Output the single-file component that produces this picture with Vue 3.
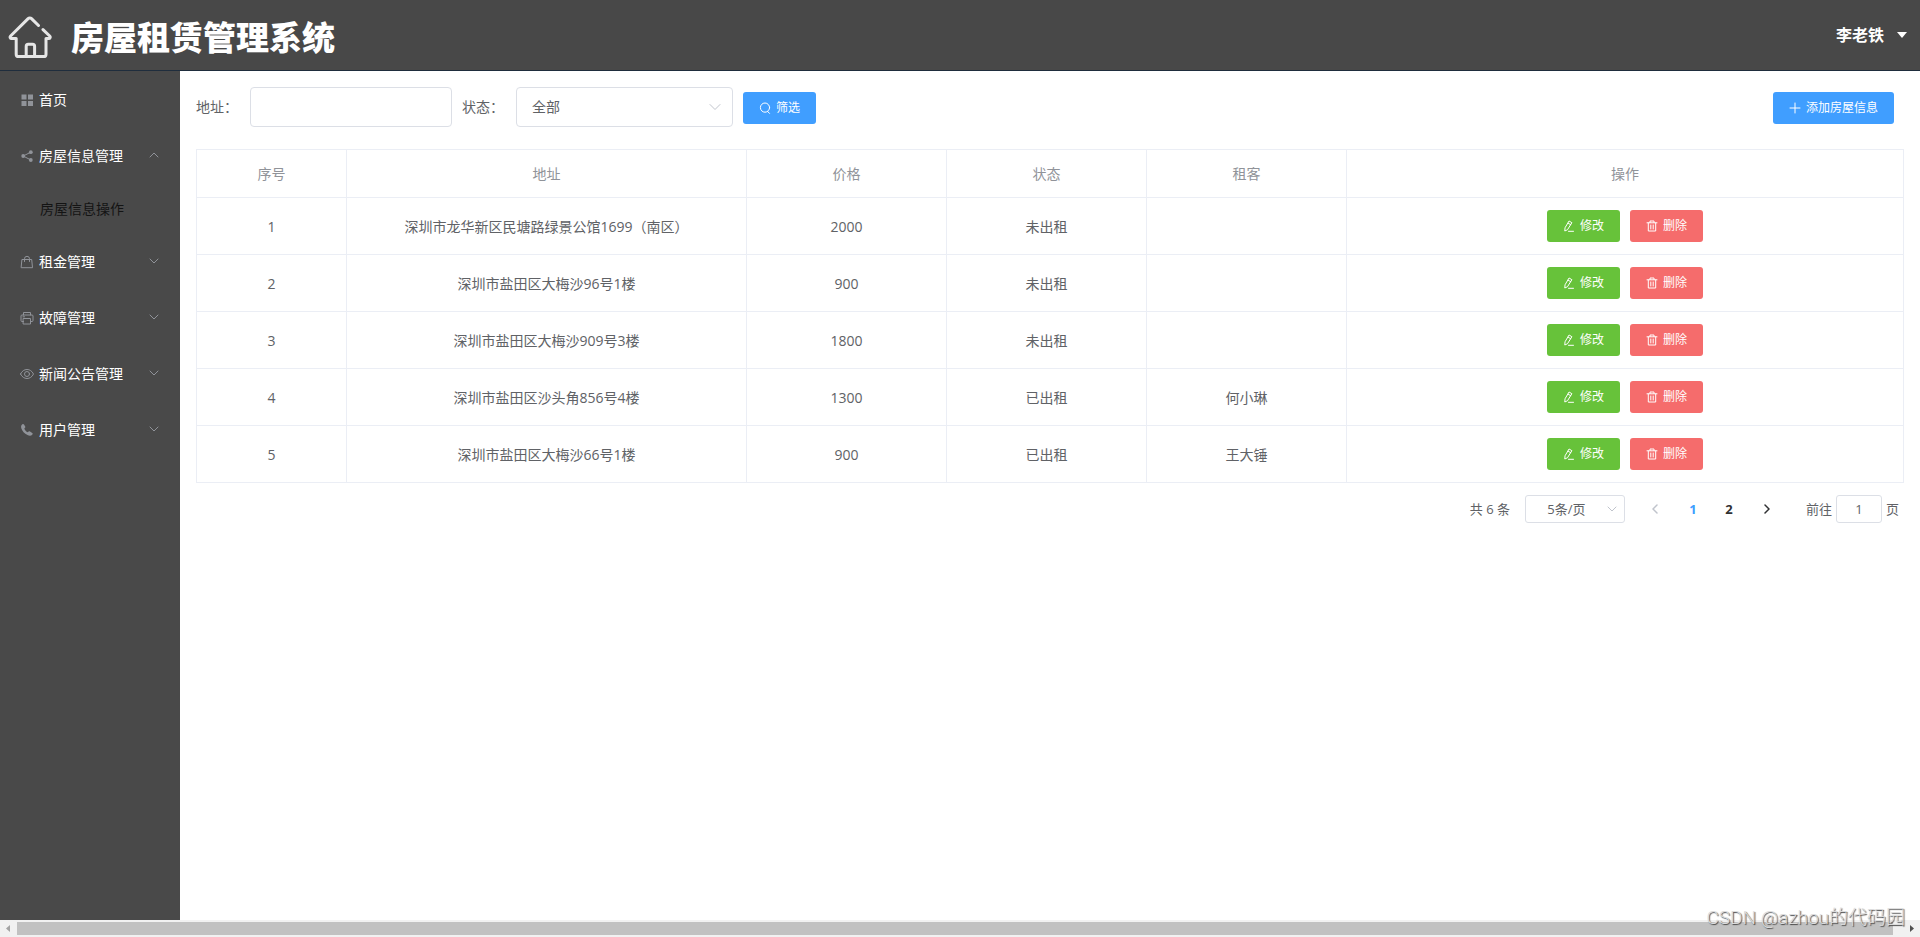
<script setup>
import { ref } from 'vue'

const address = ref('')
const status = ref('全部')
const pageSize = ref('5条/页')
const jump = ref('1')

const menuAfter = [
  { icon: 'bag', title: '租金管理' },
  { icon: 'printer', title: '故障管理' },
  { icon: 'view', title: '新闻公告管理' },
  { icon: 'phone', title: '用户管理' },
]

const columns = ['序号', '地址', '价格', '状态', '租客', '操作']

const houses = [
  { id: 1, address: '深圳市龙华新区民塘路绿景公馆1699（南区）', price: 2000, status: '未出租', tenant: '' },
  { id: 2, address: '深圳市盐田区大梅沙96号1楼', price: 900, status: '未出租', tenant: '' },
  { id: 3, address: '深圳市盐田区大梅沙909号3楼', price: 1800, status: '未出租', tenant: '' },
  { id: 4, address: '深圳市盐田区沙头角856号4楼', price: 1300, status: '已出租', tenant: '何小琳' },
  { id: 5, address: '深圳市盐田区大梅沙66号1楼', price: 900, status: '已出租', tenant: '王大锤' },
]
</script>

<template>
  <div class="app">
    <header class="topbar">
      <svg class="logo" viewBox="0 0 44 44" aria-hidden="true">
        <path d="M30.5 10.5 23.5 3.6a2.4 2.4 0 0 0-3.4 0L2.6 21c-1 1-.4 2.6 1 2.6h4.6v15.6A2.4 2.4 0 0 0 10.6 41.600h25A2.400 2.400 0 0 0 38 39.200V23.600h2.700c1.400 0 2-1.600 1-2.600L35 14.600" />
        <path d="M18.200 41V31.200a2 2 0 0 1 2-2h4.400a2 2 0 0 1 2 2V41" />
      </svg>
      <h1 class="brand">房屋租赁管理系统</h1>
      <button class="user" type="button">
        <span>李老铁</span>
        <svg viewBox="0 0 10 6" width="10" height="6" aria-hidden="true"><path d="M0 0h10L5 6z" fill="#fff" /></svg>
      </button>
    </header>

    <div class="body">
      <nav class="sidebar">
        <a class="item" href="#">
          <svg class="ico solid" viewBox="0 0 14 14" aria-hidden="true">
            <path d="M1.500 1.500h5v5h-5zM8 1.500h5v5H8zM1.500 8h5v5h-5zM8 8h5v5H8z" />
          </svg>
          <span>首页</span>
        </a>
        <button class="item" type="button">
          <svg class="ico solid" viewBox="0 0 14 14" aria-hidden="true">
            <circle cx="3.200" cy="7" r="1.900" /><circle cx="10.800" cy="3.200" r="1.900" /><circle cx="10.800" cy="11" r="1.900" />
            <path d="M3.200 7 10.800 3.200M3.200 7l7.600 4" stroke="#909399" stroke-width="1" />
          </svg>
          <span>房屋信息管理</span>
          <svg class="arrow" viewBox="0 0 12 12" aria-hidden="true"><path d="M2 8 6 4l4 4" /></svg>
        </button>
        <a class="subitem" href="#">房屋信息操作</a>
        <button v-for="m in menuAfter" :key="m.title" class="item" type="button">
          <svg v-if="m.icon === 'bag'" class="ico" viewBox="0 0 14 14" aria-hidden="true">
            <path d="M2.300 4.500h9.400l.8 8.200h-11zM4.500 6.500V3.800a2.500 2.500 0 0 1 5 0v2.700" />
          </svg>
          <svg v-else-if="m.icon === 'printer'" class="ico" viewBox="0 0 14 14" aria-hidden="true">
            <path d="M3.500 4V1.500h7V4M3.500 10.500h-1.500a1 1 0 0 1-1-1V5a1 1 0 0 1 1-1h10a1 1 0 0 1 1 1v4.500a1 1 0 0 1-1 1h-1.500M3.500 7.500h7v5.500h-7zM3 5.800h1.500" />
          </svg>
          <svg v-else-if="m.icon === 'view'" class="ico" viewBox="0 0 14 14" aria-hidden="true">
            <path d="M.5 7C2 4 4.300 2.500 7 2.500S12 4 13.500 7C12 10 9.700 11.500 7 11.500S2 10 .5 7z" /><circle cx="7" cy="7" r="2.500" />
          </svg>
          <svg v-else class="ico solid" viewBox="0 0 14 14" aria-hidden="true">
            <path d="M2.400 1.300c.6-.5 1.200-.3 1.600.3l1.200 1.900c.3.500.2 1-.2 1.300l-.7.600c.6 1.700 1.800 3 3.500 3.900l.8-.7c.4-.4.9-.4 1.400-.1l2.200 1.500c.6.4.7 1 .2 1.500-1.300 1.500-3 1.500-4.900.6C4.400 10.600 2.200 8 1.300 5.200.8 3.600 1.100 2.300 2.400 1.300z" />
          </svg>
          <span>{{ m.title }}</span>
          <svg class="arrow" viewBox="0 0 12 12" aria-hidden="true"><path d="m2 4 4 4 4-4" /></svg>
        </button>
      </nav>

      <main class="content">
        <form class="filters" @submit.prevent>
          <label class="address-label" for="address">地址：</label>
          <input id="address" v-model="address" class="field address" type="text">
          <label class="status-label" for="status">状态：</label>
          <span class="select-wrap status">
            <select id="status" v-model="status" class="field">
              <option>全部</option>
              <option>未出租</option>
              <option>已出租</option>
            </select>
            <svg class="chev" viewBox="0 0 12 12" aria-hidden="true"><path d="M1 3.500 6 8.500l5-5" /></svg>
          </span>
          <button class="btn primary search" type="submit">
            <svg viewBox="0 0 12 12" aria-hidden="true"><circle cx="6" cy="5.600" r="4.600" /><path d="m8.600 9.400 1.900 2" /></svg>
            <span>筛选</span>
          </button>
          <button class="btn primary add" type="button">
            <svg viewBox="0 0 12 12" aria-hidden="true"><path d="M6 1v10M1 6h10" /></svg>
            <span>添加房屋信息</span>
          </button>
        </form>

        <table class="grid">
          <colgroup>
            <col class="w-id"><col class="w-addr"><col class="w-mid"><col class="w-mid"><col class="w-mid"><col>
          </colgroup>
          <thead>
            <tr><th v-for="c in columns" :key="c" scope="col">{{ c }}</th></tr>
          </thead>
          <tbody>
            <tr v-for="h in houses" :key="h.id">
              <td>{{ h.id }}</td>
              <td>{{ h.address }}</td>
              <td>{{ h.price }}</td>
              <td>{{ h.status }}</td>
              <td>{{ h.tenant }}</td>
              <td class="ops">
                <div class="actions">
                  <button class="btn success" type="button">
                    <svg viewBox="0 0 12 12" aria-hidden="true"><path d="M6.400 1.200 8.900 2.700 4.500 9.700 1.800 11l.2-2.800zM5.200 3.200l2.500 1.500M5.500 11.300h5" /></svg>
                    <span>修改</span>
                  </button>
                  <button class="btn danger" type="button">
                    <svg viewBox="0 0 12 12" aria-hidden="true"><path d="M1 2.800h10M4 2.500v-1.500h4v1.500M2.300 3v8h7.400V3M4.800 5v4M7.200 5v4" /></svg>
                    <span>删除</span>
                  </button>
                </div>
              </td>
            </tr>
          </tbody>
        </table>

        <div class="pager">
          <span class="total">共 6 条</span>
          <span class="select-wrap size">
            <select v-model="pageSize" class="field" aria-label="每页条数">
              <option>5条/页</option>
              <option>10条/页</option>
            </select>
            <svg class="chev" viewBox="0 0 12 12" aria-hidden="true"><path d="M2 4 6 8l4-4" /></svg>
          </span>
          <button class="page step prev" type="button" aria-label="上一页" disabled>
            <svg viewBox="0 0 12 12" aria-hidden="true"><path d="M8 2 4 6l4 4" /></svg>
          </button>
          <button class="page current" type="button">1</button>
          <button class="page" type="button">2</button>
          <button class="page step" type="button" aria-label="下一页">
            <svg viewBox="0 0 12 12" aria-hidden="true"><path d="m4 2 4 4-4 4" /></svg>
          </button>
          <label class="jump">前往<input v-model="jump" class="field" type="text">页</label>
        </div>
      </main>
    </div>

    <div class="hscroll" aria-hidden="true">
      <svg viewBox="0 0 17 17"><path d="M10 5v7L6 8.500z" fill="#a3a3a3" /></svg>
      <div class="thumb"></div>
      <svg class="end" viewBox="0 0 17 17"><path d="M7 5v7l4-3.500z" fill="#505050" /></svg>
    </div>
    <div class="watermark">CSDN @azhou的代码园</div>
  </div>
</template>

<style>
body {
  margin: 0;
}
</style>

<style scoped>
.app,
.app * {
  box-sizing: border-box;
}
.app {
  position: relative;
  display: flex;
  flex-direction: column;
  min-height: 100vh;
  background: #fff;
  color: #606266;
  font-family: "Open Sans", "Noto Sans CJK SC", sans-serif;
  font-size: 14px;
  line-height: 20px;
}
button,
input,
select {
  font: inherit;
  color: inherit;
  margin: 0;
}
button {
  cursor: pointer;
}
svg {
  flex: none;
  fill: none;
  stroke-linecap: round;
  stroke-linejoin: round;
}
.topbar {
  display: flex;
  align-items: center;
  height: 71px;
  padding: 0 13px 0 8px;
  background: #484848;
  border-bottom: 1px solid #1f2d3d;
}
.logo {
  width: 44px;
  height: 44px;
  margin-top: 4px;
  stroke: #e6e6e6;
  stroke-width: 3;
}
.brand {
  margin: 6px 0 0 19px;
  color: #fff;
  font-size: 33px;
  font-weight: 900;
  line-height: 40px;
}
.user {
  display: flex;
  align-items: center;
  gap: 13px;
  margin-left: auto;
  padding: 0;
  border: 0;
  background: none;
  color: #fff;
  font-size: 16px;
  font-weight: 700;
}
.body {
  display: flex;
  flex: 1;
}
.sidebar {
  flex: none;
  width: 180px;
  padding-top: 1px;
  background: #494949;
}
.item {
  display: flex;
  align-items: center;
  gap: 5px;
  width: 100%;
  height: 56px;
  padding: 0 20px;
  border: 0;
  background: none;
  color: #fff;
  text-decoration: none;
}
.ico {
  width: 14px;
  height: 14px;
  stroke: #909399;
  stroke-width: 1;
}
.ico.solid {
  fill: #909399;
  stroke: none;
}
.arrow {
  width: 12px;
  height: 12px;
  margin-left: auto;
  margin-bottom: 3px;
  stroke: #909399;
  stroke-width: 1;
}
.subitem {
  display: block;
  height: 50px;
  padding-left: 40px;
  color: #141414;
  line-height: 50px;
  text-decoration: none;
}
.content {
  flex: 1;
  min-width: 0;
  padding: 16px;
}
.filters {
  display: flex;
  align-items: center;
  height: 40px;
  margin-bottom: 22px;
}
.filters .btn {
  margin-top: 2px;
}
.field {
  display: block;
  border: 1px solid #dcdfe6;
  border-radius: 4px;
  background: #fff;
  outline: none;
  appearance: none;
}
.address-label {
  width: 54px;
}
.address {
  width: 202px;
  height: 40px;
  padding: 0 15px;
}
.status-label {
  width: 54px;
  margin-left: 10px;
}
.select-wrap {
  position: relative;
  display: block;
}
.select-wrap .field {
  width: 100%;
  height: 100%;
}
.chev {
  position: absolute;
  top: 0;
  bottom: 0;
  right: 12px;
  width: 12px;
  height: 12px;
  margin: auto 0;
  stroke: #c0c4cc;
  stroke-width: 1;
  pointer-events: none;
}
.status {
  width: 217px;
  height: 40px;
}
.status .field {
  padding: 0 15px;
}
.btn {
  display: inline-flex;
  align-items: center;
  justify-content: center;
  gap: 5px;
  height: 32px;
  padding: 0 16px;
  border: 0;
  border-radius: 3px;
  color: #fff;
  font-size: 12px;
  line-height: 12px;
}
.btn svg {
  width: 12px;
  height: 12px;
  stroke: #fff;
  stroke-width: 1;
}
.primary {
  background: #409eff;
}
.success {
  background: #67c23a;
}
.danger {
  background: #f56c6c;
}
.search {
  margin-left: 10px;
}
.add {
  margin-left: auto;
  margin-right: 10px;
}
.grid {
  width: 100%;
  border: 1px solid #ebeef5;
  border-right: 0;
  border-bottom: 0;
  border-spacing: 0;
  table-layout: fixed;
}
.w-id {
  width: 150px;
}
.w-addr {
  width: 400px;
}
.w-mid {
  width: 200px;
}
.grid th,
.grid td {
  height: 57px;
  padding: 2px 10px 0;
  border-right: 1px solid #ebeef5;
  border-bottom: 1px solid #ebeef5;
  text-align: center;
}
.grid th {
  height: 48px;
  padding-top: 0;
  color: #909399;
  font-weight: 400;
}
.grid .ops {
  padding-top: 0;
}
.actions {
  display: flex;
  justify-content: center;
  gap: 10px;
}
.pager {
  display: flex;
  align-items: center;
  justify-content: flex-end;
  height: 28px;
  margin-top: 12px;
  padding-right: 5px;
  font-size: 13px;
}
.size {
  width: 100px;
  height: 28px;
  margin-left: 15px;
  margin-right: 10px;
}
.size .field {
  padding: 0 25px 0 8px;
  border-radius: 3px;
  text-align: center;
  text-align-last: center;
}
.size .chev {
  right: 7px;
}
.page {
  display: flex;
  align-items: center;
  justify-content: center;
  width: 36px;
  height: 28px;
  padding: 0;
  border: 0;
  background: none;
  color: #303133;
  font-weight: 700;
}
.page.current {
  color: #409eff;
}
.page.step {
  width: 40px;
}
.page svg {
  width: 12px;
  height: 12px;
  stroke: #303133;
  stroke-width: 1.5;
}
.page.prev svg {
  stroke: #c0c4cc;
}
.jump {
  display: flex;
  align-items: center;
  margin-left: 19px;
}
.jump .field {
  width: 46px;
  height: 28px;
  margin: 0 4px;
  padding: 0 3px;
  border-radius: 3px;
  text-align: center;
}
.hscroll {
  display: flex;
  align-items: center;
  height: 17px;
  background: #f1f1f1;
}
.hscroll svg {
  width: 17px;
  height: 17px;
}
.hscroll .end {
  margin-left: 10px;
}
.thumb {
  flex: 1;
  height: 13px;
  background: #c1c1c1;
}
.watermark {
  position: absolute;
  right: 15px;
  bottom: 6px;
  color: #dcdcdc;
  font-family: Roboto, "Noto Sans CJK SC", sans-serif;
  font-size: 19px;
  font-weight: 300;
  line-height: 26px;
  text-shadow: 1px 1px 1px #444;
}
</style>
